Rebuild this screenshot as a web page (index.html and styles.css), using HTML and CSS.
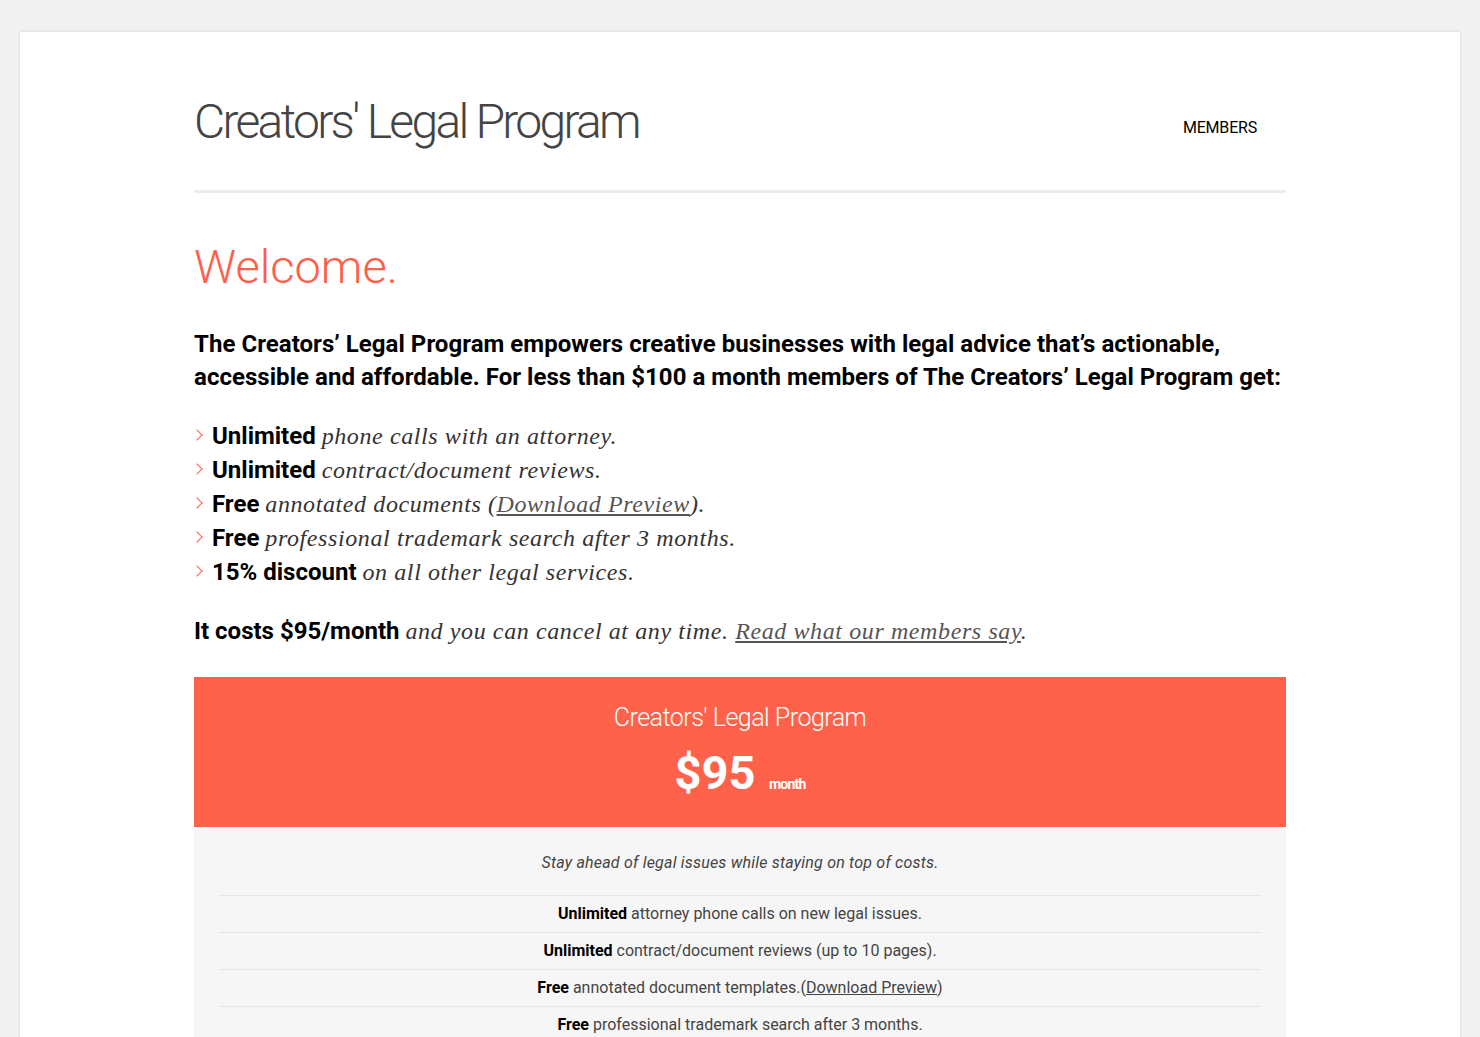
FILE: index.html
```html
<!DOCTYPE html>
<html lang="en">
<head>
  <meta charset="UTF-8" />
  <title>Creators' Legal Program</title>
  <link rel="stylesheet" href="styles.css">
</head>
<body>
  <div class="page">
    <div class="wrap">
      <header class="site-header">
        <h1 class="site-title">Creators' Legal Program</h1>
        <nav class="site-nav">
          <a href="#">MEMBERS</a>
        </nav>
      </header>

      <h2 class="welcome">Welcome.</h2>

      <p class="intro">The Creators&#8217; Legal Program empowers creative businesses with legal advice that&#8217;s actionable, accessible and affordable. For less than $100 a month members of The Creators&#8217; Legal Program get:</p>

      <ul class="perks">
        <li><strong>Unlimited</strong> <em>phone calls with an attorney.</em></li>
        <li><strong>Unlimited</strong> <em>contract/document reviews.</em></li>
        <li><strong>Free</strong> <em>annotated documents (<a href="#">Download Preview</a>).</em></li>
        <li><strong>Free</strong> <em>professional trademark search after 3 months.</em></li>
        <li><strong>15% discount</strong> <em>on all other legal services.</em></li>
      </ul>

      <p class="cost"><strong>It costs $95/month</strong> <em>and you can cancel at any time. <a href="#">Read what our members say</a>.</em></p>

      <div class="plan">
        <div class="plan-head">
          <div class="plan-name">Creators' Legal Program</div>
          <div class="plan-price">$95 <span>month</span></div>
        </div>
        <div class="plan-body">
          <p class="plan-tagline">Stay ahead of legal issues while staying on top of costs.</p>
          <ul class="plan-list">
            <li><strong>Unlimited</strong> attorney phone calls on new legal issues.</li>
            <li><strong>Unlimited</strong> contract/document reviews (up to 10 pages).</li>
            <li><strong>Free</strong> annotated document templates.(<a href="#">Download Preview</a>)</li>
            <li><strong>Free</strong> professional trademark search after 3 months.</li>
            <li><strong>15%</strong> discount on all other legal services.</li>
          </ul>
        </div>
      </div>
    </div>
  </div>
</body>
</html>
```

FILE: styles.css
```css
body {
  margin: 0;
  background: #f1f1f1;
  font-family: Roboto, 'Liberation Sans', sans-serif;
  color: #000;
}

.page {
  margin: 32px 20px 0;
  background: #fff;
  box-shadow: 0 0 3px rgba(0, 0, 0, 0.12);
  padding-bottom: 60px;
}

.wrap {
  width: 1092px;
  margin: 0 auto;
}

.site-header {
  display: flex;
  justify-content: space-between;
  align-items: center;
  padding: 60px 0 38px;
  border-bottom: 3px solid #ececec;
}

.site-title {
  margin: 0;
  font-size: 48px;
  font-weight: 300;
  letter-spacing: -2.7px;
  line-height: 60px;
  color: #444;
}

.site-nav a {
  display: block;
  padding: 0 29px 0 0;
  margin-top: 10px;
  font-size: 16px;
  letter-spacing: -0.2px;
  color: #000;
  text-decoration: none;
}

.welcome {
  margin: 44px 0 31px;
  font-size: 47px;
  font-weight: 300;
  line-height: 60px;
  color: #ff5f4a;
}

.intro {
  margin: 0 0 25px;
  font-size: 24px;
  font-weight: 700;
  line-height: 33px;
  letter-spacing: 0.04px;
}

.perks {
  list-style: none;
  margin: 0 0 25px;
  padding: 0;
}

.perks li {
  position: relative;
  padding-left: 18px;
  font-size: 24px;
  line-height: 34px;
}

/* chevron bullet */
.perks li::before {
  content: "";
  position: absolute;
  left: -1px;
  top: 12px;
  width: 7px;
  height: 7px;
  border-top: 1.5px solid #ff5f4a;
  border-right: 1.5px solid #ff5f4a;
  transform: rotate(45deg);
}

strong {
  font-weight: 700;
}

.perks em,
.cost em {
  font-family: 'Liberation Serif', serif;
  font-weight: 400;
  font-size: 24px;
  letter-spacing: 0.6px;
  color: #333;
}

.perks a,
.cost a {
  color: #555;
}

.cost {
  margin: 0 0 29px;
  font-size: 24px;
  line-height: 34px;
}

.plan-head {
  background: #ff624b;
  color: #fff;
  text-align: center;
  padding: 26px 0 15px;
}

.plan-name {
  font-size: 25px;
  font-weight: 300;
  line-height: 30px;
  letter-spacing: -0.5px;
}

.plan-price {
  margin-top: 12px;
  font-size: 47px;
  font-weight: 700;
  line-height: 56px;
}

.plan-price span {
  font-size: 14px;
  letter-spacing: -0.8px;
  margin-left: 2px;
}

.plan-body {
  background: #f6f6f6;
  padding: 24px 25px 10px;
  text-align: center;
  font-size: 16px;
  color: #444;
}

.plan-tagline {
  margin: 0 0 20px;
  font-style: italic;
  line-height: 24px;
  letter-spacing: 0.2px;
}

.plan-list {
  list-style: none;
  margin: 0;
  padding: 0;
}

.plan-list li {
  border-top: 1px solid #e6e6e6;
  padding: 6px 0;
  line-height: 24px;
}

.plan-list strong {
  color: #000;
}

.plan-list a {
  color: #444;
}
```
